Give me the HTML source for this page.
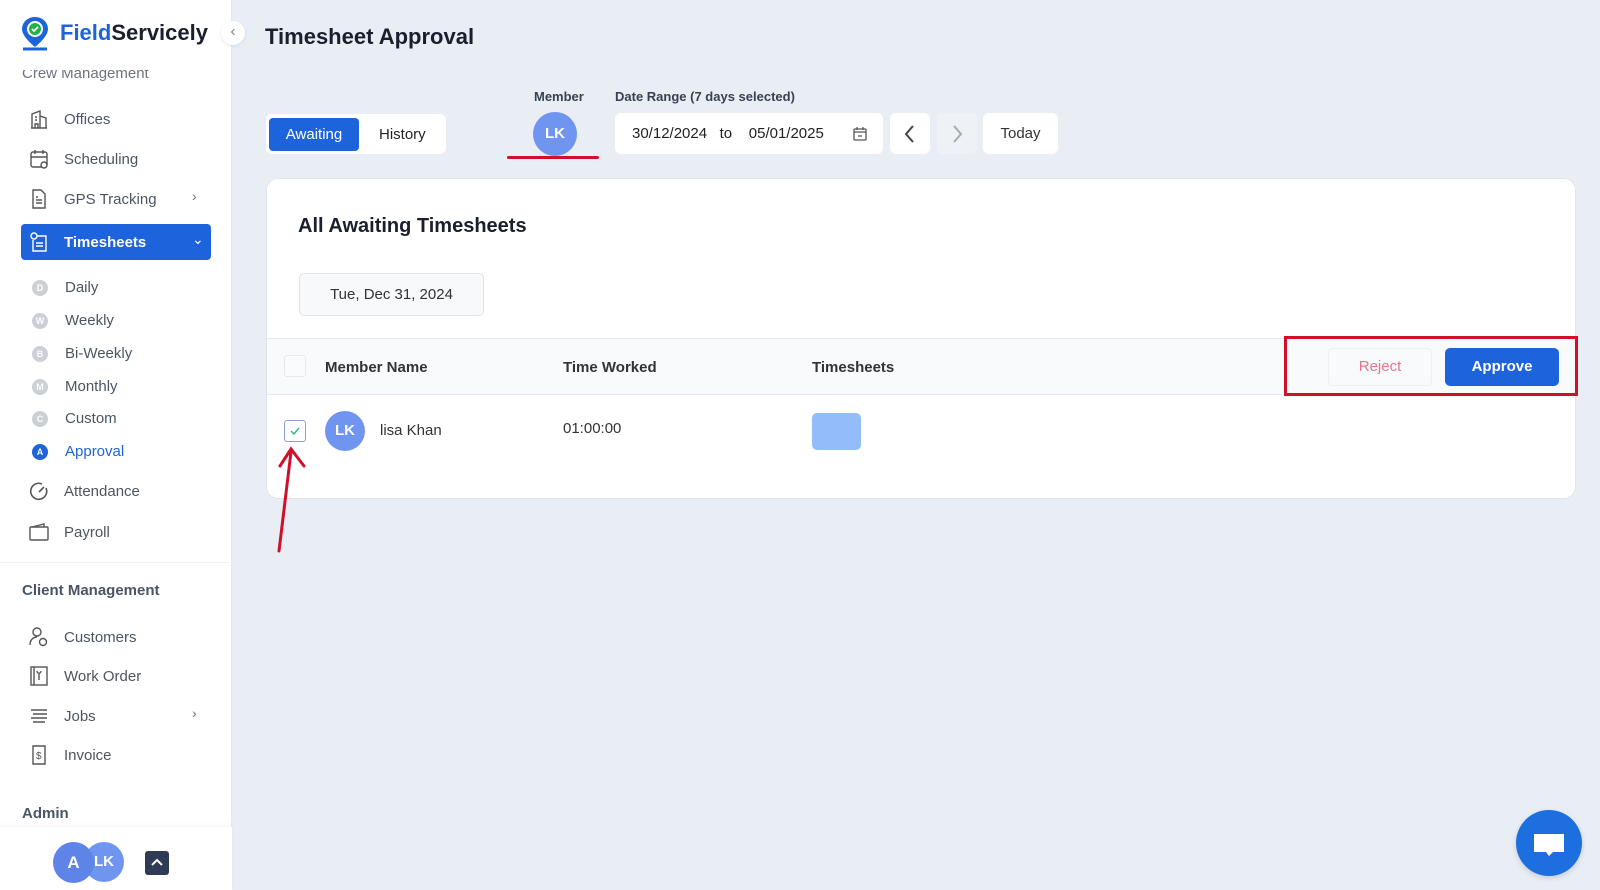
<!DOCTYPE html>
<html><head><meta charset="utf-8"><style>
*{box-sizing:border-box;margin:0;padding:0}
body{width:1600px;height:890px;overflow:hidden;background:#e9eef5;font-family:"Liberation Sans",sans-serif;color:#1f2937;position:relative}
.abs{position:absolute}
.sb{position:absolute;left:0;top:0;width:232px;height:890px;background:#fff;border-right:1px solid #e2e8f0}
.nav{position:absolute;left:28px;font-size:15px;color:#4b5563;display:flex;align-items:center}
.nav svg{width:22px;height:22px;margin-right:14px}
.sub{position:absolute;left:32px;font-size:15px;color:#4b5563;display:flex;align-items:center}
.sub i{display:inline-block;width:16px;height:16px;border-radius:50%;background:#cbd0d6;color:#fff;font-size:9px;font-weight:bold;font-style:normal;text-align:center;line-height:16px;margin-right:17px}
.sec{position:absolute;left:22px;font-size:15px;color:#4b5563;font-weight:bold}
.chev{position:absolute;left:192px;color:#6b7280;font-size:14px}
.lbl{position:absolute;font-size:13px;color:#374151;font-weight:bold}
.box{position:absolute;background:#fff;border-radius:6px}
</style></head><body>
<div class="sb">
  <svg class="abs" style="left:20px;top:16px" width="30" height="36" viewBox="0 0 30 36"><path d="M15 1C7 1 2 7 2 13c0 8 13 18 13 18s13-10 13-18C28 7 23 1 15 1z" fill="#1d63dc"/><circle cx="15" cy="13" r="8" fill="#fff"/><circle cx="15" cy="13" r="6" fill="#22b24c"/><path d="M12 13l2 2 4-4" stroke="#fff" stroke-width="1.8" fill="none"/><path d="M3 33h24" stroke="#1d63dc" stroke-width="3"/></svg>
  <div class="abs" style="left:60px;top:20px;font-size:22px;font-weight:bold;letter-spacing:0px"><span style="color:#1d63dc">Field</span><span style="color:#1a1f2e">Servicely</span></div>
  <div class="abs" style="left:22px;top:70px;height:13px;overflow:hidden;width:200px"><div style="margin-top:-5px;font-size:15px;color:#6b7280">Crew Management</div></div>
  <div class="nav" style="top:108px"><svg viewBox="0 0 22 22" fill="none" stroke="#555" stroke-width="1.4"><path d="M3 20h16M4 20V6l8-3v17M12 8l6 2v10M7 20v-4h3v4M7 9h2M7 12h2"/></svg>Offices</div>
  <div class="nav" style="top:148px"><svg viewBox="0 0 22 22" fill="none" stroke="#555" stroke-width="1.4"><rect x="3" y="4" width="16" height="15" rx="2"/><path d="M3 9h16M7 2v4M15 2v4"/><circle cx="16" cy="17" r="3" fill="#fff"/></svg>Scheduling</div>
  <div class="nav" style="top:188px"><svg viewBox="0 0 22 22" fill="none" stroke="#555" stroke-width="1.4"><path d="M5 2h8l4 4v14H5z M8 12h6M8 15h6M8 9h2"/></svg>GPS Tracking</div>
  <div class="chev" style="top:188px">&#8250;</div>
  <div class="abs" style="left:21px;top:224px;width:190px;height:36px;background:#1d63dc;border-radius:4px"></div>
  <div class="nav" style="top:231px;color:#fff;font-weight:bold"><svg viewBox="0 0 22 22" fill="none" stroke="#fff" stroke-width="1.4"><circle cx="6" cy="5" r="3"/><path d="M9 5h9v15H5V9M8 12h7M8 15h7"/></svg>Timesheets</div>
  <div class="chev" style="top:231px;color:#fff">&#8964;</div>
  <div class="sub" style="top:279px"><i>D</i>Daily</div>
  <div class="sub" style="top:312px"><i>W</i>Weekly</div>
  <div class="sub" style="top:345px"><i>B</i>Bi-Weekly</div>
  <div class="sub" style="top:378px"><i>M</i>Monthly</div>
  <div class="sub" style="top:410px"><i>C</i>Custom</div>
  <div class="sub" style="top:443px;color:#1d63dc"><i style="background:#1d63dc">A</i>Approval</div>
  <div class="nav" style="top:480px"><svg viewBox="0 0 22 22" fill="none" stroke="#555" stroke-width="1.6"><path d="M18 8a8 8 0 1 1-4-4"/><path d="M11 12l5-5"/></svg>Attendance</div>
  <div class="nav" style="top:521px"><svg viewBox="0 0 22 22" fill="none" stroke="#555" stroke-width="1.4"><rect x="2" y="6" width="18" height="13" rx="1"/><path d="M4 6l12-3v3"/></svg>Payroll</div>
  <div class="abs" style="left:0;top:562px;width:232px;height:1px;background:#eef0f3"></div>
  <div class="sec" style="top:582px">Client Management</div>
  <div class="nav" style="top:626px"><svg viewBox="0 0 22 22" fill="none" stroke="#555" stroke-width="1.4"><circle cx="9" cy="6" r="4"/><path d="M2 19c0-5 3-8 7-8"/><circle cx="15" cy="16" r="3.5"/></svg>Customers</div>
  <div class="nav" style="top:665px"><svg viewBox="0 0 22 22" fill="none" stroke="#555" stroke-width="1.4"><rect x="3" y="2" width="16" height="18"/><path d="M6 2v18M9 6c0 3 4 3 4 0M11 9v6"/></svg>Work Order</div>
  <div class="nav" style="top:705px"><svg viewBox="0 0 22 22" fill="none" stroke="#555" stroke-width="1.4"><path d="M3 5h16M5 9h14M3 13h16M5 17h12"/></svg>Jobs</div>
  <div class="chev" style="top:705px">&#8250;</div>
  <div class="nav" style="top:744px"><svg viewBox="0 0 22 22" fill="none" stroke="#555" stroke-width="1.4"><path d="M5 2h12v18H5z"/><text x="8" y="15" font-size="10" fill="#555" stroke="none">$</text></svg>Invoice</div>
  <div class="sec" style="top:805px">Admin</div>
  <div class="abs" style="left:0;top:827px;width:232px;height:63px;background:#fff;box-shadow:0 -2px 4px rgba(0,0,0,.04)"></div>
  <div class="abs" style="left:84px;top:842px;width:40px;height:40px;border-radius:50%;background:#6f95f0;color:#fff;font-weight:bold;font-size:15px;text-align:center;line-height:40px">LK</div>
  <div class="abs" style="left:53px;top:842px;width:41px;height:41px;border-radius:50%;background:#5d84e6;color:#fff;font-weight:bold;font-size:17px;text-align:center;line-height:41px">A</div>
  <div class="abs" style="left:145px;top:851px;width:24px;height:24px;border-radius:3px;background:#2f3a55"><svg width="24" height="24"><path d="M7 14l5-5 5 5" stroke="#fff" stroke-width="2" fill="none"/></svg></div>
</div>
<div class="abs" style="left:221px;top:21px;width:24px;height:24px;border-radius:50%;background:#fff;box-shadow:0 1px 3px rgba(0,0,0,.1);color:#888;text-align:center;line-height:22px;font-size:16px">&#8249;</div>

<div class="abs" style="left:265px;top:24px;font-size:22px;font-weight:bold;color:#1a1f2e">Timesheet Approval</div>
<div class="box" style="left:266px;top:114px;width:180px;height:40px"></div>
<div class="abs" style="left:269px;top:118px;width:90px;height:33px;background:#1d63dc;border-radius:4px;color:#fff;font-size:15px;text-align:center;line-height:33px">Awaiting</div>
<div class="abs" style="left:379px;top:118px;font-size:15px;line-height:33px;color:#222">History</div>
<div class="lbl" style="left:534px;top:89px">Member</div>
<div class="abs" style="left:533px;top:112px;width:44px;height:44px;border-radius:50%;background:#6f95f0;color:#fff;font-weight:bold;font-size:15px;text-align:center;line-height:44px">LK</div>
<div class="abs" style="left:507px;top:156px;width:92px;height:3px;background:#d0102a;border-radius:2px"></div>
<div class="lbl" style="left:615px;top:89px">Date Range (7 days selected)</div>
<div class="box" style="left:615px;top:113px;width:268px;height:41px"></div>
<div class="abs" style="left:632px;top:125px;font-size:15px;color:#222">30/12/2024 &nbsp;&nbsp;to &nbsp;&nbsp;&nbsp;05/01/2025</div>
<svg class="abs" style="left:852px;top:126px" width="16" height="16" fill="none" stroke="#555" stroke-width="1.3"><rect x="2" y="3" width="12" height="11" rx="1"/><path d="M2 6h12M5 1v3M11 1v3M6 10h4"/></svg>
<div class="box" style="left:890px;top:113px;width:40px;height:41px"><svg width="40" height="41"><path d="M23 13l-7 8 7 8" stroke="#444" stroke-width="2" fill="none"/></svg></div>
<div class="box" style="left:937px;top:113px;width:40px;height:41px;background:#eef1f5"><svg width="40" height="41"><path d="M17 13l7 8-7 8" stroke="#aaa" stroke-width="2" fill="none"/></svg></div>
<div class="box" style="left:983px;top:113px;width:75px;height:41px;text-align:center;line-height:41px;font-size:15px;color:#333">Today</div>

<div class="abs" style="left:266px;top:178px;width:1310px;height:321px;background:#fff;border:1px solid #dfe4ea;border-radius:12px;overflow:hidden">
  <div class="abs" style="left:31px;top:36px;font-size:20px;font-weight:bold;color:#1a1f2e">All Awaiting Timesheets</div>
  <div class="abs" style="left:32px;top:94px;width:185px;height:43px;border:1px solid #dfe3e8;background:#f7f9fb;border-radius:5px;text-align:center;line-height:41px;font-size:15px;color:#333">Tue, Dec 31, 2024</div>
  <div class="abs" style="left:0;top:159px;width:1310px;height:57px;background:#f8fafc;border-top:1px solid #e5e8ec;border-bottom:1px solid #e5e8ec"></div>
  <div class="abs" style="left:17px;top:176px;width:22px;height:22px;border:1px solid #e5e8ec;border-radius:3px;background:#fafbfc"></div>
  <div class="abs" style="left:58px;top:180px;font-size:15px;font-weight:bold;color:#333">Member Name</div>
  <div class="abs" style="left:296px;top:180px;font-size:15px;font-weight:bold;color:#333">Time Worked</div>
  <div class="abs" style="left:545px;top:180px;font-size:15px;font-weight:bold;color:#333">Timesheets</div>
  <div class="abs" style="left:1061px;top:169px;width:104px;height:38px;border:1px solid #eceef1;border-radius:5px;text-align:center;line-height:36px;font-size:15px;color:#e0778a">Reject</div>
  <div class="abs" style="left:1178px;top:169px;width:114px;height:38px;background:#1d63dc;border-radius:5px;text-align:center;line-height:38px;font-size:15px;font-weight:bold;color:#fff">Approve</div>
  <div class="abs" style="left:17px;top:241px;width:22px;height:22px;border:1px solid #8aa0d0;border-radius:3px"><svg width="20" height="20"><path d="M6 10l3 3 5-6" stroke="#2bb58a" stroke-width="1.4" fill="none"/></svg></div>
  <div class="abs" style="left:58px;top:232px;width:40px;height:40px;border-radius:50%;background:#6f95f0;color:#fff;font-weight:bold;font-size:15px;text-align:center;line-height:40px">LK</div>
  <div class="abs" style="left:113px;top:243px;font-size:15px;color:#333">lisa Khan</div>
  <div class="abs" style="left:296px;top:241px;font-size:15px;color:#333">01:00:00</div>
  <div class="abs" style="left:545px;top:234px;width:49px;height:37px;background:#93bdfa;border-radius:5px"></div>
</div>
<div class="abs" style="left:1284px;top:336px;width:294px;height:60px;border:3px solid #d0102a"></div>
<svg class="abs" style="left:0;top:0" width="1600" height="890"><path d="M279 551L291 452M280 466L291 449L304 466" stroke="#d0102a" stroke-width="3" fill="none" stroke-linecap="round"/></svg>
<div class="abs" style="left:1516px;top:810px;width:66px;height:66px;border-radius:50%;background:#1d6fe0;box-shadow:0 2px 6px rgba(0,0,0,.15)"><svg width="66" height="66"><path d="M18 24h30v18H37l-4 4-3-4H18z" fill="#fff"/></svg></div>
</body></html>
